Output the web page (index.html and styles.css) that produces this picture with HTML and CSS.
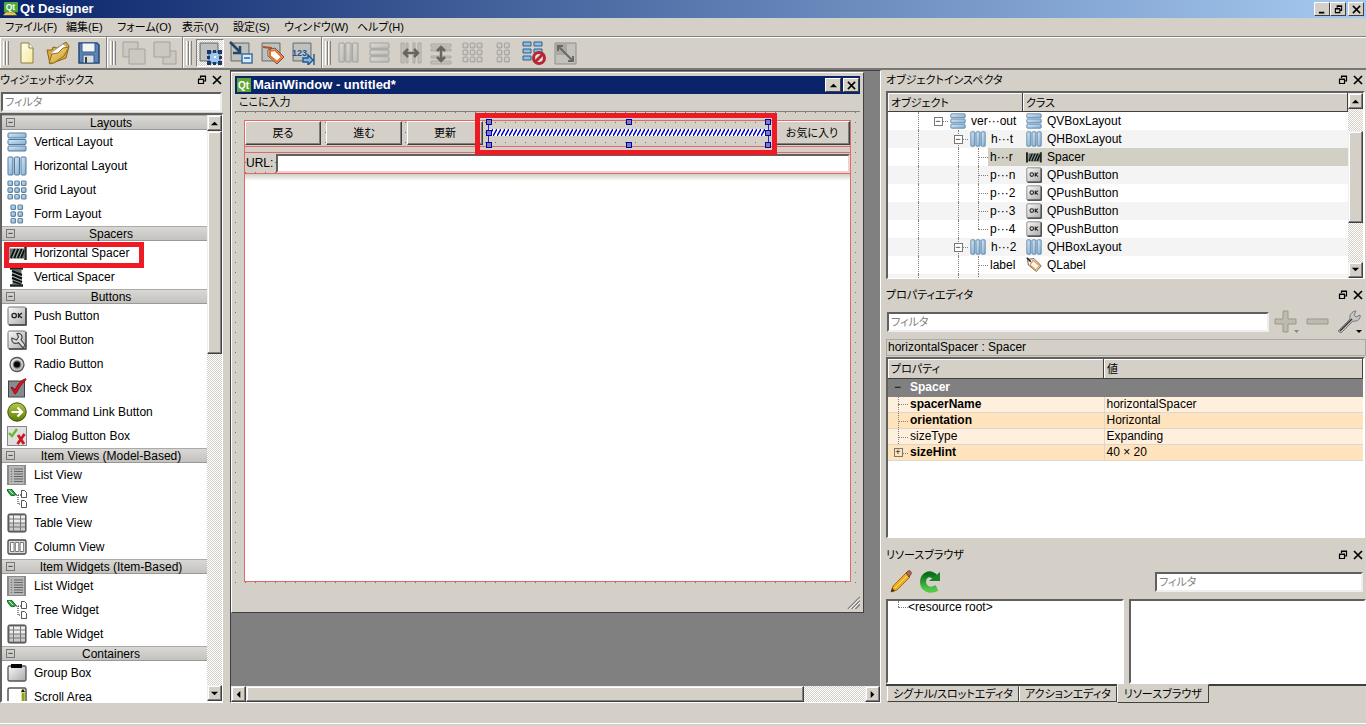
FILE: index.html
```html
<!DOCTYPE html>
<html lang="ja">
<head>
<meta charset="utf-8">
<title>Qt Designer</title>
<link rel="stylesheet" href="styles.css">
</head>
<body>
<svg class="defs" aria-hidden="true">
  <defs>
    <linearGradient id="blue" x1="0" y1="0" x2="1" y2="1"><stop offset="0" stop-color="#d8ecfa"/><stop offset="1" stop-color="#7eabd0"/></linearGradient>
    <linearGradient id="silver" x1="0" y1="0" x2="1" y2="1"><stop offset="0" stop-color="#fafafa"/><stop offset="1" stop-color="#a9a9a9"/></linearGradient>
    <linearGradient id="green" x1="0" y1="0" x2="0" y2="1"><stop offset="0" stop-color="#b4ca4c"/><stop offset="1" stop-color="#5e7a00"/></linearGradient>
    <linearGradient id="refresh" x1="0" y1="0" x2="0" y2="1"><stop offset="0" stop-color="#0c6e1c"/><stop offset="1" stop-color="#52c848"/></linearGradient>
    <linearGradient id="amber" x1="0" y1="0" x2="1" y2="1"><stop offset="0" stop-color="#f8e29a"/><stop offset="1" stop-color="#c8921c"/></linearGradient>
    <linearGradient id="paper" x1="0" y1="0" x2="1" y2="1"><stop offset="0" stop-color="#fffef0"/><stop offset="1" stop-color="#f5ea96"/></linearGradient>
    <pattern id="hatch" width="4" height="7" patternUnits="userSpaceOnUse"><path d="M0 0h4v7H0z" fill="#fff"/><path d="M0 7 4 0" stroke="#0000c8" stroke-width="1.5"/></pattern>
  </defs>
  <symbol id="vbox" viewBox="0 0 20 20"><g fill="url(#blue)" stroke="#52789a"><rect x="1" y="1" width="18" height="5" rx="1"/><rect x="1" y="7.500" width="18" height="5" rx="1"/><rect x="1" y="14" width="18" height="5" rx="1"/></g></symbol>
  <symbol id="hbox" viewBox="0 0 20 20"><g fill="url(#blue)" stroke="#52789a"><rect x="1" y="1" width="5" height="18" rx="1"/><rect x="7.500" y="1" width="5" height="18" rx="1"/><rect x="14" y="1" width="5" height="18" rx="1"/></g></symbol>
  <symbol id="grid" viewBox="0 0 20 20"><g fill="url(#blue)" stroke="#6184a2" stroke-width="1.200"><rect x="1" y="1" width="4.500" height="4.500" rx="1"/><rect x="7.800" y="1" width="4.500" height="4.500" rx="1"/><rect x="14.500" y="1" width="4.500" height="4.500" rx="1"/><rect x="1" y="7.800" width="4.500" height="4.500" rx="1"/><rect x="7.800" y="7.800" width="4.500" height="4.500" rx="1"/><rect x="14.500" y="7.800" width="4.500" height="4.500" rx="1"/><rect x="1" y="14.500" width="4.500" height="4.500" rx="1"/><rect x="7.800" y="14.500" width="4.500" height="4.500" rx="1"/><rect x="14.500" y="14.500" width="4.500" height="4.500" rx="1"/></g></symbol>
  <symbol id="form" viewBox="0 0 20 20"><g fill="url(#blue)" stroke="#6184a2" stroke-width="1.200"><rect x="4" y="1" width="4.500" height="4.500" rx="1"/><rect x="11" y="1" width="4.500" height="4.500" rx="1"/><rect x="4" y="7.800" width="4.500" height="4.500" rx="1"/><rect x="11" y="7.800" width="4.500" height="4.500" rx="1"/><rect x="4" y="14.500" width="4.500" height="4.500" rx="1"/><rect x="11" y="14.500" width="4.500" height="4.500" rx="1"/></g></symbol>
  <symbol id="hspacer" viewBox="0 0 20 20"><path d="M3 5.500h14v10H3z" fill="#63706c"/><path d="M4 15 8 6M7.500 15l4-9M11 15l4-9M14 15l3-8" stroke="#0a0e0e" stroke-width="2"/><path d="M5.500 14.500 9 6.500M9 14.500l3.500-8M12.500 14.500 16 6.500" stroke="#bcc8c2" stroke-width=".8"/><path d="M1.200 4v13M18.500 4v13" stroke="#222" stroke-width="2.400"/></symbol>
  <symbol id="vspacer" viewBox="0 0 20 20"><path d="M5.500 3h9v14h-9z" fill="#63706c"/><path d="M5 4l10 4M5 7.500l10 4M5 11l10 4M6 14l8 3" stroke="#0a0e0e" stroke-width="2"/><path d="M6 6l8 3.500M6 9.500l8 3.500M6 13l8 3" stroke="#bcc8c2" stroke-width=".8"/><path d="M3 1.500h13M3 18.500h13" stroke="#222" stroke-width="2.600"/></symbol>
  <symbol id="ok" viewBox="0 0 20 20"><rect x="1" y="1" width="18" height="18" rx="1.500" fill="url(#silver)" stroke="#777"/><path d="M19 2v17H2" fill="none" stroke="#3c3c3c" stroke-width="1.500"/><circle cx="7.200" cy="9.500" r="2.200" fill="none" stroke="#222" stroke-width="1.300"/><path d="M11.500 7v5M15 7l-3 2.500 3 2.500" fill="none" stroke="#222" stroke-width="1.300"/></symbol>
  <symbol id="tool" viewBox="0 0 20 20"><rect x="1" y="1" width="18" height="18" rx="1.500" fill="url(#silver)" stroke="#777"/><path d="M19 2v17H2" fill="none" stroke="#444" stroke-width="1.300"/><path d="M10 3.500c4-1 6.500 3 4 6.300L18 15l-2 3-4.500-5.500C8 15 3.800 12 5 8l4.500 2 2-3z" fill="#dedede" stroke="#4c4c4c" stroke-width="1.200"/></symbol>
  <symbol id="radio" viewBox="0 0 20 20"><circle cx="10" cy="10.500" r="7" fill="url(#silver)" stroke="#555" stroke-width="1.300"/><circle cx="10" cy="10.500" r="4.300" fill="#777"/><circle cx="10" cy="10.500" r="3" fill="#050505"/></symbol>
  <symbol id="check" viewBox="0 0 20 20"><rect x="1.500" y="3" width="16" height="16" fill="#858b90" stroke="#444"/><path d="M4 9.500c2-.5 3 1 4 2.500C11 6 14 2 18.500.800c1 0 .5 1.500-.5 2.200C14 6 11 12 9 15.500c-1 1-2 0-2-1z" fill="#d81418" stroke="#7e080a" stroke-width=".8"/></symbol>
  <symbol id="link" viewBox="0 0 20 20"><circle cx="10" cy="10" r="9.200" fill="url(#green)" stroke="#3e5200"/><path d="M4.500 10H15M10.500 5.500 15 10l-4.500 4.500" fill="none" stroke="#fff" stroke-width="2.200"/></symbol>
  <symbol id="dialog" viewBox="0 0 20 20"><rect x=".5" y=".5" width="19" height="19" fill="#e0e0e0" stroke="#888"/><path d="M2 7l3 3 5-7" fill="none" stroke="#63b835" stroke-width="2.400"/><path d="M11 9l6 9M17.500 8l-7 10" fill="none" stroke="#cf1822" stroke-width="2.800"/></symbol>
  <symbol id="list" viewBox="0 0 20 20"><path d="M0 0h19v20H0z" fill="#8b8b8b"/><path d="M2 1h15v18H2z" fill="#b7b7b7"/><path d="M4 4h1M7 4h9M4 6.500h1M7 6.500h9M4 9h1M7 9h9M4 11.500h1M7 11.500h9M4 14h1M7 14h9M4 16.500h1M7 16.500h9" stroke="#666"/></symbol>
  <symbol id="tree" viewBox="0 0 20 20"><path d="M0 1c1-1.500 3-1.500 5-.5l4 5c-2 1.500-5 1.500-6 0z" fill="#39a648" stroke="#135c20"/><path d="M2 1l4 4" stroke="#bbf0bb"/><path d="M9 6h5M11 6v9h3" fill="none" stroke="#222" stroke-dasharray="1 1"/><g fill="#fff" stroke="#555"><path d="M14.500 1.500h3l2 2v5h-5zM14.500 11.500h3l2 2v5h-5z"/></g></symbol>
  <symbol id="table" viewBox="0 0 20 20"><rect x="1" y="1" width="18" height="18" rx="1.500" fill="#777" stroke="#414141"/><g fill="#eee"><path d="M2.500 2.500h3.500v3H2.500zM7 2.500h6v3H7zM14 2.500h4v3h-4zM2.500 6.500h3.500v3H2.500zM7 6.500h6v3H7zM14 6.500h4v3h-4z"/><path d="M2.500 10.500h3.500v3H2.500zM7 10.500h6v3H7zM14 10.500h4v3h-4zM2.500 14.500h3.500v3H2.500zM7 14.500h6v3H7zM14 14.500h4v3h-4z" fill="#ccc"/></g></symbol>
  <symbol id="column" viewBox="0 0 20 20"><rect x="1" y="3" width="18" height="14" rx="1.500" fill="#ddd" stroke="#444" stroke-width="1.300"/><g fill="#fff" stroke="#777"><path d="M3.500 5.500H7v9H3.500zM8.300 5.500h3.500v9H8.300zM13.100 5.500h3.500v9h-3.500z"/></g></symbol>
  <symbol id="group" viewBox="0 0 20 20"><rect x="1" y="3" width="18" height="15" rx="1.500" fill="url(#silver)" stroke="#555" stroke-width="1.300"/><path d="M4 1h11v4H4z" fill="#050505"/></symbol>
  <symbol id="scroll" viewBox="0 0 20 20"><rect x="1" y="1" width="18" height="20" rx="1.500" fill="#fff" stroke="#555" stroke-width="1.500"/><path d="M14 2h4v19h-4z" fill="#d8dca0"/><path d="M15 6h2.500v14H15z" fill="#94a80c"/><path d="M14 5l2-3 2 3z" fill="#111"/></symbol>
  <symbol id="tag" viewBox="0 0 20 20"><path d="M2 3l8-1 9 9-6 7L3 10z" fill="#fff" stroke="#4a3520"/><path d="M9 4l8 7-5 5-7-6z" fill="#fff4e4" stroke="#e09a50" stroke-width="1.500"/><path d="M1 1l5 5" stroke="#222" stroke-width="2"/></symbol>
  <symbol id="restore" viewBox="0 0 10 10"><path d="M3.500 3V1.500h5V6H7M3 1h6M1.500 4.500h5v4h-5zM1 4h6" fill="none" stroke="#000" stroke-width="1.200"/></symbol>
  <symbol id="close" viewBox="0 0 10 10"><path d="M1 1l8 8M9 1 1 9" stroke="#000" stroke-width="1.700"/></symbol>
  <symbol id="minimize" viewBox="0 0 10 10"><path d="M1 8.500h6" stroke="#000" stroke-width="2"/></symbol>
  <symbol id="up" viewBox="0 0 10 10"><path d="M5 3l4 4H1z"/></symbol>
  <symbol id="down" viewBox="0 0 10 10"><path d="M5 7 1 3h8z"/></symbol>
  <symbol id="left" viewBox="0 0 10 10"><path d="M3 5l4-4v8z"/></symbol>
  <symbol id="right" viewBox="0 0 10 10"><path d="M7 5 3 9V1z"/></symbol>
  <symbol id="square" viewBox="0 0 24 24"><path d="M2 2h18v18H2z" fill="#aeb0af" stroke="#6c7070"/><path d="M3 3h16v16H3z" fill="#bfc1bf"/></symbol>
</svg>

<header class="titlebar">
  <svg class="app-icon" viewBox="0 0 16 16"><rect width="15" height="11" x="1" rx="1" fill="#4fa83c"/><path d="M0 14l3-3h9l3 3z" fill="#e5c844"/><text x="3" y="9" class="logo-text">Qt</text></svg>
  <h1>Qt Designer</h1>
  <div class="win-buttons"><button aria-label="最小化"><svg><use href="#minimize"/></svg></button><button aria-label="元に戻す"><svg><use href="#restore"/></svg></button><button class="apart" aria-label="閉じる"><svg><use href="#close"/></svg></button></div>
</header>

<nav class="menubar">
  <button class="m-file">ファイル(F)</button><button class="m-edit">編集(E)</button><button class="m-form">フォーム(O)</button><button class="m-edit">表示(V)</button><button class="m-edit">設定(S)</button><button class="m-window">ウィンドウ(W)</button><button>ヘルプ(H)</button>
</nav>

<div class="toolbars">
  <div class="toolbar">
    <button aria-label="新規"><svg viewBox="0 0 24 24"><path d="M6 2h8l4 5v15H6z" fill="url(#paper)" stroke="#8a7e48"/><path d="M14 2v5h4" fill="#fff" stroke="#8a7e48"/></svg></button>
    <button aria-label="開く"><svg viewBox="0 0 24 24"><path d="M1 9h5l1-3 4 1 9-6 3 4-3 12-16 6z" fill="#d9a93e" stroke="#8d6517"/><path d="M5 12 17 3l4 3-10 10z" fill="#fff" stroke="#aaa"/><path d="M3 22l3-9 6-1 5-5 6-1-5 9-10 7z" fill="url(#amber)" stroke="#976d18"/></svg></button>
    <button aria-label="保存"><svg viewBox="0 0 24 24"><path d="M2 2h18l2 2v18H2z" fill="#5b84b4" stroke="#254a74" stroke-width="1.500"/><path d="M5 2h13v9H5z" fill="#f2f5f8" stroke="#345c88"/><path d="M6 14h11v8H6z" fill="#ddd" stroke="#345c88"/><path d="M9 16v6" stroke="#35424e" stroke-width="2"/></svg></button>
  </div>
  <div class="toolbar">
    <button aria-label="前面へ"><svg viewBox="0 0 24 24" class="faded"><path d="M1 1h15v15H1z"/><path d="M7 8h16v15H7z"/></svg></button>
    <button aria-label="背面へ"><svg viewBox="0 0 24 24" class="faded"><path d="M10 10h13v13H10z"/><path d="M1 1h16v15H1z"/></svg></button>
  </div>
  <div class="toolbar modes">
    <button class="pressed" aria-label="ウィジェットを編集"><svg viewBox="0 0 24 24"><use href="#square"/><path d="M11 11h11v11H11z" fill="#9cc7f1" stroke="#386ba0"/><path d="M16 15h2v2h-2z" fill="#fff"/><g fill="#203666"><path d="M9 9h4v4H9zM15 9h3v3h-3zM20 9h4v4h-4zM9 15h3v3H9zM21 15h3v3h-3zM9 20h4v4H9zM15 21h3v3h-3zM20 20h4v4h-4z"/></g></svg></button>
    <button aria-label="シグナルを編集"><svg viewBox="0 0 24 24"><use href="#square"/><path d="M1 1l10 10M11 5v7H4" fill="none" stroke="#234568" stroke-width="2.500"/><path d="M13 13h10v9H13z" fill="#d8ecfb" stroke="#3d6f9f" stroke-width="1.500"/><path d="M15 17h6" stroke="#5088bd" stroke-width="2"/></svg></button>
    <button aria-label="buddyを編集"><svg viewBox="0 0 24 24"><use href="#square"/><path d="M3 6l8 1 2 3" fill="none" stroke="#b84d1c" stroke-width="2"/><path d="M8 9l7-2 9 9-7 7-9-8z" fill="#fff" stroke="#555"/><path d="M10 10l5-1 7 7-5 5-7-6z" fill="none" stroke="#ef6d21" stroke-width="2"/></svg></button>
    <button aria-label="タブ順序を編集"><svg viewBox="0 0 24 24"><use href="#square"/><text x="1" y="15" class="tab-text">123</text><path d="M12 17h5v-3l5 5-5 5v-3h-5zM23 13v11" fill="#80b9e9" stroke="#25558b" stroke-width="1.400"/></svg></button>
  </div>
  <div class="toolbar layouts">
    <button aria-label="水平に並べる"><svg class="gray" viewBox="0 0 20 20"><use href="#hbox"/></svg></button>
    <button aria-label="垂直に並べる"><svg class="gray" viewBox="0 0 20 20"><use href="#vbox"/></svg></button>
    <button aria-label="水平スプリッタ"><svg viewBox="0 0 24 24"><path d="M3 2h3v20H3zM8 2h2v20H8zM15 2h2v20h-2zM20 2h3v20h-3z" fill="#c3c1ba" stroke="#aaa8a1"/><path d="M6 12h14M10 8l-4 4 4 4M16 8l4 4-4 4" fill="none" stroke="#68655f" stroke-width="2.500"/></svg></button>
    <button aria-label="垂直スプリッタ"><svg viewBox="0 0 24 24"><path d="M2 3h20v3H2zM2 8h20v2H2zM2 15h20v2H2zM2 20h20v3H2z" fill="#c3c1ba" stroke="#aaa8a1"/><path d="M12 6v14M8 10l4-4 4 4M8 16l4 4 4-4" fill="none" stroke="#68655f" stroke-width="2.500"/></svg></button>
    <button aria-label="格子状に並べる"><svg class="gray" viewBox="0 0 20 20"><use href="#grid"/></svg></button>
    <button aria-label="フォームレイアウト"><svg class="gray" viewBox="0 0 20 20"><use href="#form"/></svg></button>
    <button aria-label="レイアウトを解除"><svg viewBox="0 0 24 24"><g fill="#8dbde5" stroke="#315e8c"><path d="M1 1h8v4H1zM12 1h8v4h-8zM1 8h8v4H1zM12 8h8v4h-8zM1 15h8v4H1z"/></g><circle cx="17" cy="17" r="5.500" fill="#ddd" stroke="#b8272d" stroke-width="3"/><path d="M13 21l8-8" stroke="#b8272d" stroke-width="3"/></svg></button>
    <button aria-label="サイズを調整"><svg viewBox="0 0 24 24"><path d="M2 2h21v21H2z" fill="#c2c1ba" stroke="#8f8d87"/><path d="M2 2h12v12H2z" fill="#aaa9a3"/><path d="M5 5l15 15M5 10V5h5M20 15v5h-5" fill="none" stroke="#6b6964" stroke-width="2"/></svg></button>
  </div>
</div>

<main class="workspace">
  <aside class="dock widget-box">
    <div class="dock-title"><h2>ウィジェットボックス</h2><button aria-label="フロート"><svg><use href="#restore"/></svg></button><button aria-label="閉じる"><svg><use href="#close"/></svg></button></div>
    <input class="field" aria-label="ウィジェットを検索" placeholder="フィルタ">
    <div class="widget-frame sunken">
      <div class="widget-list">
        <button class="category"><i class="toggle">−</i><span>Layouts</span></button>
        <ul><li><svg><use href="#vbox"/></svg>Vertical Layout</li><li><svg><use href="#hbox"/></svg>Horizontal Layout</li><li><svg><use href="#grid"/></svg>Grid Layout</li><li><svg><use href="#form"/></svg>Form Layout</li></ul>
        <button class="category"><i class="toggle">−</i><span>Spacers</span></button>
        <ul><li class="marked"><svg><use href="#hspacer"/></svg>Horizontal Spacer</li><li><svg><use href="#vspacer"/></svg>Vertical Spacer</li></ul>
        <button class="category"><i class="toggle">−</i><span>Buttons</span></button>
        <ul><li><svg><use href="#ok"/></svg>Push Button</li><li><svg><use href="#tool"/></svg>Tool Button</li><li><svg><use href="#radio"/></svg>Radio Button</li><li><svg><use href="#check"/></svg>Check Box</li><li><svg><use href="#link"/></svg>Command Link Button</li><li><svg><use href="#dialog"/></svg>Dialog Button Box</li></ul>
        <button class="category"><i class="toggle">−</i><span>Item Views (Model-Based)</span></button>
        <ul><li><svg><use href="#list"/></svg>List View</li><li><svg><use href="#tree"/></svg>Tree View</li><li><svg><use href="#table"/></svg>Table View</li><li><svg><use href="#column"/></svg>Column View</li></ul>
        <button class="category"><i class="toggle">−</i><span>Item Widgets (Item-Based)</span></button>
        <ul><li><svg><use href="#list"/></svg>List Widget</li><li><svg><use href="#tree"/></svg>Tree Widget</li><li><svg><use href="#table"/></svg>Table Widget</li></ul>
        <button class="category"><i class="toggle">−</i><span>Containers</span></button>
        <ul><li><svg><use href="#group"/></svg>Group Box</li><li><svg><use href="#scroll"/></svg>Scroll Area</li></ul>
      </div>
      <div class="scrollbar vertical"><button aria-label="上へ"><svg><use href="#up"/></svg></button><span class="thumb widget-thumb"></span><span class="grow"></span><button aria-label="下へ"><svg><use href="#down"/></svg></button></div>
    </div>
  </aside>

  <section class="mdi">
    <div class="canvas">
      <div class="subwindow">
        <div class="sub-title"><svg class="qt-icon" viewBox="0 0 14 14"><rect width="14" height="14" fill="#5fa633"/><text x="1" y="11" class="logo-text large">Qt</text></svg><h2>MainWindow - untitled*</h2><div class="win-buttons"><button aria-label="最大化"><svg><use href="#up"/></svg></button><button class="apart" aria-label="閉じる"><svg><use href="#close"/></svg></button></div></div>
        <div class="sub-menu"><button>ここに入力</button></div>
        <div class="form-area">
          <div class="vlayout">
            <div class="button-row">
              <button class="push">戻る</button><button class="push">進む</button><button class="push">更新</button>
              <div class="spacer"><svg class="hatch"><rect width="100%" height="7" fill="url(#hatch)"/></svg><i class="h nw"></i><i class="h n"></i><i class="h ne"></i><i class="h w"></i><i class="h e"></i><i class="h sw"></i><i class="h s"></i><i class="h se"></i></div>
              <button class="push">お気に入り</button>
            </div>
            <div class="url-row"><label for="url">URL:</label><input id="url" class="url"></div>
            <div class="web-view"></div>
          </div>
        </div>
        <div class="form-status"><svg viewBox="0 0 14 14"><path d="M1 14 14 1M5 14l9-9M9 14l5-5" stroke="#808080" stroke-width="1.500"/><path d="M2.500 14 14 2.500M6.500 14 14 6.500" stroke="#fff"/></svg></div>
      </div>
    </div>
    <div class="scrollbar horizontal"><button aria-label="左へ"><svg><use href="#left"/></svg></button><span class="thumb mdi-thumb"></span><span class="grow"></span><button aria-label="右へ"><svg><use href="#right"/></svg></button></div>
  </section>

  <aside class="right-docks">
    <section class="dock inspector">
      <div class="dock-title"><h2>オブジェクトインスペクタ</h2><button aria-label="フロート"><svg><use href="#restore"/></svg></button><button aria-label="閉じる"><svg><use href="#close"/></svg></button></div>
      <div class="tree-frame sunken">
        <div class="tree-view">
          <table class="object-tree">
            <thead><tr><th>オブジェクト</th><th>クラス</th></tr></thead>
            <tbody>
              <tr><td><div class="branch"><i></i><i class="v"></i><i class="x"><b class="toggle">−</b></i><svg><use href="#vbox"/></svg>ver···out</div></td><td><svg><use href="#vbox"/></svg>QVBoxLayout</td></tr>
              <tr><td><div class="branch"><i></i><i class="v"></i><i></i><i class="x v"><b class="toggle">−</b></i><svg><use href="#hbox"/></svg>h···t</div></td><td><svg><use href="#hbox"/></svg>QHBoxLayout</td></tr>
              <tr class="selected"><td><div class="branch"><i></i><i class="v"></i><i></i><i class="v"></i><i class="v t"></i><span>h···r</span></div></td><td><svg><use href="#hspacer"/></svg>Spacer</td></tr>
              <tr><td><div class="branch"><i></i><i class="v"></i><i></i><i class="v"></i><i class="v t"></i><span>p···n</span></div></td><td><svg><use href="#ok"/></svg>QPushButton</td></tr>
              <tr><td><div class="branch"><i></i><i class="v"></i><i></i><i class="v"></i><i class="v t"></i><span>p···2</span></div></td><td><svg><use href="#ok"/></svg>QPushButton</td></tr>
              <tr><td><div class="branch"><i></i><i class="v"></i><i></i><i class="v"></i><i class="v t"></i><span>p···3</span></div></td><td><svg><use href="#ok"/></svg>QPushButton</td></tr>
              <tr><td><div class="branch"><i></i><i class="v"></i><i></i><i class="v"></i><i class="l t"></i><span>p···4</span></div></td><td><svg><use href="#ok"/></svg>QPushButton</td></tr>
              <tr><td><div class="branch"><i></i><i class="v"></i><i></i><i class="x v"><b class="toggle">−</b></i><svg><use href="#hbox"/></svg>h···2</div></td><td><svg><use href="#hbox"/></svg>QHBoxLayout</td></tr>
              <tr><td><div class="branch"><i></i><i class="v"></i><i></i><i class="v"></i><i class="v t"></i><span>label</span></div></td><td><svg><use href="#tag"/></svg>QLabel</td></tr>
              <tr><td><div class="branch"><i></i><i class="v"></i><i></i><i class="v"></i><i class="l t"></i><span>li···it</span></div></td><td class="no-icon">QLineEdit</td></tr>
            </tbody>
          </table>
        </div>
        <div class="scrollbar vertical"><button aria-label="上へ"><svg><use href="#up"/></svg></button><span class="track-gap"></span><span class="thumb tree-thumb"></span><span class="grow"></span><button aria-label="下へ"><svg><use href="#down"/></svg></button></div>
      </div>
    </section>

    <section class="dock properties">
      <div class="dock-title"><h2>プロパティエディタ</h2><button aria-label="フロート"><svg><use href="#restore"/></svg></button><button aria-label="閉じる"><svg><use href="#close"/></svg></button></div>
      <div class="property-tools">
        <input class="field" aria-label="プロパティを検索" placeholder="フィルタ">
        <button aria-label="追加"><svg viewBox="0 0 26 24"><path d="M9 1h5v8h8v5h-8v8H9v-8H1V9h8z" fill="#bdbbb0" stroke="#9a988f"/><path d="M20 20h5l-2.500 3z" fill="#888"/></svg></button>
        <button aria-label="削除"><svg viewBox="0 0 26 24"><path d="M2 9h21v5H2z" fill="#bdbbb0" stroke="#9a988f"/></svg></button>
        <button aria-label="設定"><svg viewBox="0 0 26 24"><path d="M2 21 14 9c-1-4 2-8 6-8l-2 4 2 2 4-2c1 4-3 7-7 6L5 23z" fill="#c5c5c5" stroke="#777"/><path d="M4 21 16 9" stroke="#333" stroke-width="1.500"/><path d="M20 20h6l-3 3z"/></svg></button>
      </div>
      <div class="selection-name">horizontalSpacer : Spacer</div>
      <div class="property-frame sunken">
        <table class="property-table">
          <thead><tr><th>プロパティ</th><th>値</th></tr></thead>
          <tbody>
            <tr class="group"><td colspan="2"><b class="minus">−</b>Spacer</td></tr>
            <tr class="pale strong"><td><div class="branch"><i class="v t"></i>spacerName</div></td><td>horizontalSpacer</td></tr>
            <tr class="deep strong"><td><div class="branch"><i class="v t"></i>orientation</div></td><td>Horizontal</td></tr>
            <tr class="pale"><td><div class="branch"><i class="v t"></i>sizeType</div></td><td>Expanding</td></tr>
            <tr class="deep strong"><td><div class="branch"><i class="x"><b class="toggle">+</b></i>sizeHint</div></td><td>40 × 20</td></tr>
          </tbody>
        </table>
      </div>
    </section>

    <section class="dock resources">
      <div class="dock-title"><h2>リソースブラウザ</h2><button aria-label="フロート"><svg><use href="#restore"/></svg></button><button aria-label="閉じる"><svg><use href="#close"/></svg></button></div>
      <div class="resource-tools">
        <button aria-label="リソースを編集"><svg viewBox="0 0 24 24"><path d="M2 22l2-6L17 3l4 4L8 20z" fill="#efad26" stroke="#a66d13"/><path d="M6 18 19 5" stroke="#ffe57c"/><path d="M17 3l2-2c2-1 4 1 3 3l-2 3z" fill="#b6694f" stroke="#7a4333"/><path d="M2 22l1-4 3 3z" fill="#3b3022"/></svg></button>
        <button aria-label="再読み込み"><svg viewBox="0 0 24 24"><path d="M17 7C11 1 5 6 5 12s6 10 14 6" fill="none" stroke="url(#refresh)" stroke-width="6"/><path d="M22 2v9H11z" fill="#18842a"/></svg></button>
        <input class="field" aria-label="リソースを検索" placeholder="フィルタ">
      </div>
      <div class="resource-panes"><div class="pane sunken"><div class="branch"><i class="l t"></i>&lt;resource root&gt;</div></div><div class="pane sunken"></div></div>
      <div class="tabs" role="tablist"><button role="tab">シグナル/スロットエディタ</button><button role="tab">アクションエディタ</button><button role="tab" aria-selected="true" class="active">リソースブラウザ</button></div>
    </section>
  </aside>
</main>
<footer class="statusbar"></footer>
</body>
</html>
```
FILE: styles.css
```css
:root {
  --face: #d4d0c8;
  --shadow: #808080;
  --dark: #404040;
  --red: #ed1c24;
  --guide: #e06a6a;
}

*, *::before, *::after { box-sizing: border-box; }

body {
  margin: 0;
  height: 100vh;
  display: flex;
  flex-direction: column;
  overflow: hidden;
  background: var(--face);
  color: #000;
  font: 12px/16px "Liberation Sans", "Noto Sans CJK JP", sans-serif;
}

button, input {
  font: inherit;
  color: inherit;
  border: 0;
  padding: 0;
  margin: 0;
  background: none;
  border-radius: 0;
}

h1, h2 { margin: 0; font-size: 12px; font-weight: normal; }
ul { margin: 0; padding: 0; list-style: none; }
i, b { font-style: normal; }
svg { display: block; flex: none; }
.defs { position: absolute; width: 0; height: 0; }
.grow { flex: 1; }

.logo-text { font: bold 9px "Liberation Sans", sans-serif; fill: #fff; }
.logo-text.large { font-size: 10px; }
.tab-text { font: bold 9px "Liberation Sans", sans-serif; fill: #25558b; }

.titlebar {
  display: flex;
  align-items: center;
  flex: none;
  height: 18px;
  padding: 0 2px 0 3px;
  gap: 2px;
  background: linear-gradient(90deg, #0a246a, #a6caf0);
  color: #fff;
}
.titlebar h1, .sub-title h2 { flex: 1; font-size: 13px; font-weight: bold; }
.app-icon { width: 15px; height: 15px; }

.win-buttons { display: flex; }
.win-buttons button {
  width: 16px;
  height: 14px;
  display: grid;
  place-items: center;
  background: var(--face);
  border: 1px solid;
  border-color: #fff var(--dark) var(--dark) #fff;
}
.win-buttons svg { width: 9px; height: 9px; }
.win-buttons .apart { margin-left: 2px; }

.menubar {
  display: flex;
  flex: none;
  height: 18px;
  padding-left: 5px;
  font-size: 11px;
  font-feature-settings: "palt";
}
.menubar button { text-align: left; white-space: nowrap; }
.m-file { width: 61px; }
.m-edit { width: 51px; }
.m-form { width: 65px; }
.m-window { width: 73px; }

.toolbars {
  display: flex;
  flex: none;
  height: 34px;
  border-top: 1px solid var(--shadow);
  border-bottom: 2px solid #777;
}
.toolbar {
  display: flex;
  align-items: center;
  gap: 5px;
  padding: 0 4px 0 14px;
  border-right: 1px solid var(--shadow);
  box-shadow: inset 1px 1px #fff;
  position: relative;
}
.toolbar:last-child { flex: 1; border-right: 0; }
.toolbar::before {
  content: "";
  position: absolute;
  left: 3px;
  top: 4px;
  bottom: 3px;
  width: 6px;
  background: linear-gradient(90deg, #fff 1px, var(--face) 1px 2px, #808080 2px 3px, #fff 3px 4px, var(--face) 4px 5px, #808080 5px);
}
.toolbar button { width: 26px; height: 28px; display: grid; place-items: center; }
.toolbar svg { width: 24px; height: 24px; }
.toolbar.modes { padding-left: 13px; gap: 3px; }
.toolbar.modes button { width: 28px; }
.toolbar.layouts { padding-left: 13px; }
.toolbar .gray { width: 21px; height: 21px; filter: grayscale(1); opacity: .5; }
.faded path { fill: #cbc8c1; stroke: #a5a29b; stroke-width: 1; }
.pressed {
  background: repeating-conic-gradient(#fff 0 25%, var(--face) 0 50%) 0 0 / 2px 2px;
  border: 1px solid;
  border-color: var(--shadow) #fff #fff var(--shadow);
}

.workspace {
  flex: 1;
  min-height: 0;
  display: grid;
  grid-template-columns: 223px minmax(0, 1fr) 482px;
}

.dock { display: flex; flex-direction: column; min-height: 0; min-width: 0; }
.dock-title { display: flex; align-items: center; flex: none; height: 19px; gap: 5px; padding: 0 3px 0 0; }
.dock-title h2 { flex: 1; font-size: 11px; font-feature-settings: "palt"; white-space: nowrap; }
.dock-title button { width: 10px; height: 10px; }
.dock-title svg { width: 10px; height: 10px; }

.sunken {
  border: 2px solid;
  border-color: #606060 #fff #fff #606060;
  background: #fff;
}
.field {
  height: 20px;
  min-width: 0;
  padding: 0 2px;
  background: #fff;
  border: 2px solid;
  border-color: #606060 #eee #eee #606060;
  font-size: 11px;
  font-feature-settings: "palt";
}
.field::placeholder { color: #808080; opacity: 1; }

.widget-box > .dock-title { padding-right: 1px; }
.widget-box > .field { margin: 3px 1px 1px; }
.widget-frame { flex: 1; min-height: 0; display: flex; border-right-width: 1px; }
.widget-list { flex: 1; min-width: 0; overflow: hidden; }
.category {
  position: relative;
  display: flex;
  align-items: center;
  width: 100%;
  height: 15px;
  padding-left: 4px;
  background: linear-gradient(#dad8d4, #c4c2be);
  border-top: 1px solid #aaa;
  border-bottom: 1px solid #999;
}
.category span { flex: 1; text-align: center; }
.toggle {
  width: 9px;
  height: 9px;
  flex: none;
  border: 1px solid #777;
  font-size: 9px;
  line-height: 7px;
  text-align: center;
  font-weight: normal;
}
.widget-list li {
  position: relative;
  display: flex;
  align-items: center;
  gap: 7px;
  height: 24px;
  padding-left: 5px;
}
.widget-list svg { width: 20px; height: 20px; }
.marked::after {
  content: "";
  position: absolute;
  left: 2px;
  top: 1px;
  width: 140px;
  height: 26px;
  z-index: 1;
  border: 5px solid var(--red);
}

.scrollbar {
  display: flex;
  flex: none;
  background: repeating-conic-gradient(#fff 0 25%, var(--face) 0 50%) 0 0 / 2px 2px;
}
.vertical { width: 15px; flex-direction: column; }
.horizontal { height: 16px; }
.scrollbar button, .thumb {
  flex: none;
  background: var(--face);
  border: 1px solid;
  border-color: #eee var(--dark) var(--dark) #eee;
  box-shadow: inset -1px -1px var(--shadow), inset 1px 1px #fff;
}
.scrollbar button { width: 15px; height: 16px; display: grid; place-items: center; }
.scrollbar svg { width: 9px; height: 9px; }
.widget-thumb { height: 38%; }
.track-gap { height: 12%; }
.tree-thumb { height: 50%; }
.mdi-thumb { width: 86%; }

.mdi {
  display: flex;
  flex-direction: column;
  min-width: 0;
  min-height: 0;
  margin: 0 3px 0 7px;
  border: 1px solid var(--dark);
  border-right-color: #fff;
  border-bottom-color: #fff;
}
.canvas { position: relative; flex: 1; min-height: 0; overflow: hidden; background: #808080; }
.subwindow {
  position: absolute;
  left: 0;
  top: 1px;
  width: 633px;
  height: 541px;
  display: flex;
  flex-direction: column;
  padding: 3px;
  background: var(--face);
  border: 1px solid;
  border-color: #fff var(--dark) var(--dark) #fff;
}
.sub-title { display: flex; align-items: center; flex: none; height: 18px; padding: 0 1px 0 2px; gap: 2px; background: #0a246a; color: #fff; }
.qt-icon { width: 14px; height: 14px; }
.sub-menu { flex: none; height: 18px; padding-left: 4px; border-bottom: 1px solid var(--shadow); font-feature-settings: "palt"; }
.sub-menu button { height: 16px; font-size: 11px; }
.form-area {
  flex: 1;
  min-height: 0;
  display: flex;
  padding: 8px 9px 4px;
  background: conic-gradient(at 1px 1px, transparent 75%, #77736b 0) 0 0 / 10px 10px;
}
.vlayout { flex: 1; min-width: 0; display: flex; flex-direction: column; border: 1px solid var(--guide); }
.button-row { position: relative; flex: none; display: flex; gap: 5px; height: 26px; border-bottom: 1px solid var(--guide); }
.push {
  width: 76px;
  height: 24px;
  flex: none;
  background: var(--face);
  border: 1px solid;
  border-color: #fff var(--dark) var(--dark) #fff;
  box-shadow: inset -1px -1px var(--shadow);
  font-feature-settings: "palt";
  font-size: 11px;
}
.spacer { position: relative; flex: 1; border: solid #2424d8; border-width: 0 1px; }
.spacer::before {
  content: "";
  position: absolute;
  inset: -8px -9px -9px -14px;
  border: 5px solid var(--red);
}
.hatch { position: absolute; left: 0; top: 8px; width: 100%; height: 7px; }
.h { position: absolute; width: 6px; height: 6px; background: #8080a0; border: 1px solid #0000b8; }
.nw, .n, .ne { top: -2px; }
.w, .e { top: 9px; }
.sw, .s, .se { bottom: -2px; }
.nw, .w, .sw { left: -3px; }
.n, .s { left: calc(50% - 3px); }
.ne, .e, .se { right: -3px; }
.url-row { flex: none; display: flex; align-items: center; gap: 6px; height: 22px; margin-top: 5px; border: solid var(--guide); border-width: 1px 0; }
.url-row label { padding-left: 1px; width: 25px; }
.url { flex: 1; min-width: 0; height: 19px; background: #fff; border: 2px solid; border-color: #606060 #f4cfcf #f4cfcf #606060; }
.web-view { flex: 1; background: linear-gradient(#cfcec6, #fff 7px); }
.form-status { flex: none; display: flex; justify-content: flex-end; align-items: flex-end; height: 23px; }
.form-status svg { width: 13px; height: 13px; }

.right-docks { display: flex; flex-direction: column; min-height: 0; padding: 0 0 0 2px; }
.inspector { flex: 214 1 0; }
.properties { flex: 259 1 0; }
.resources { flex: 159 1 0; }
.properties, .resources { padding-top: 4px; }
.tree-frame { flex: 1; min-height: 0; display: flex; margin: 2px 1px 3px 0; border-bottom-width: 1px; }
.tree-view { flex: 1; min-width: 0; overflow: hidden; }

table { width: 100%; border-collapse: collapse; table-layout: fixed; }
th {
  height: 19px;
  padding: 0 3px;
  text-align: left;
  font-size: 11px;
  font-weight: normal;
  font-feature-settings: "palt";
  background: var(--face);
  box-shadow: inset -1px -1px var(--dark), inset 1px 1px #fff;
}
td { padding: 0; white-space: nowrap; }
.object-tree th:first-child { width: 135px; }
.object-tree tr { height: 18px; }
.object-tree tbody tr:nth-child(even) { background: #f4f4f5; }
.object-tree td:last-child { padding-left: 3px; }
.object-tree td > svg { display: inline-block; vertical-align: middle; margin-right: 5px; }
.object-tree svg { width: 16px; height: 16px; }
.object-tree td:last-child.no-icon { padding-left: 24px; }
.object-tree .selected td:last-child,
.selected .branch span { background: #d2cfc5; }
.object-tree .branch { height: 18px; }
.object-tree .branch svg { margin: 0 5px 0 2px; }
.object-tree .branch span { flex: 1; line-height: 18px; padding-left: 2px; }

.branch { display: flex; align-items: center; height: 15px; }
.branch i { position: relative; flex: none; width: 20px; align-self: stretch; display: grid; place-items: center; }
.branch .v::before, .branch .l::before {
  content: "";
  position: absolute;
  left: 10px;
  top: 0;
  height: 100%;
  border-left: 1px dotted #808080;
}
.branch .l::before { height: 50%; }
.branch .t::after, .branch .x::after {
  content: "";
  position: absolute;
  left: 10px;
  right: 0;
  top: 50%;
  border-top: 1px dotted #808080;
}
.branch .toggle { position: relative; z-index: 1; background: #fff; }

.property-tools { display: flex; flex: none; align-items: center; gap: 5px; height: 34px; padding: 0 4px 0 1px; }
.property-tools .field { flex: 1; }
.property-tools svg { width: 26px; height: 24px; }
.selection-name { flex: none; height: 17px; line-height: 15px; padding-left: 1px; border: 1px solid #aaa8a0; }
.property-frame { flex: 1; min-height: 0; margin: 1px 1px 4px 0; border-bottom-width: 1px; overflow: hidden; }
.property-table th:first-child { width: 216px; }
.property-table th { height: 20px; }
.property-table tr { height: 16px; }
.property-table .group { height: 18px; background: #808080; color: #fff; font-weight: bold; }
.minus { display: inline-block; width: 22px; padding-left: 6px; color: #000; font-weight: normal; }
.property-table td { line-height: 15px; }
.pale { background: #fff0dd; }
.deep { background: #ffe3bd; }
.pale td, .deep td { border-bottom: 1px solid #ddd6cf; }
.pale td:last-child, .deep td:last-child { padding-left: 2px; border-left: 1px solid #ddd6cf; }
.strong .branch { font-weight: bold; }
.property-table .branch i { margin-right: 2px; }
.deep .toggle { background: #ffe3bd; }

.resource-tools { display: flex; flex: none; align-items: center; gap: 5px; height: 34px; padding: 0 3px; }
.resource-tools svg { width: 24px; height: 24px; }
.resource-tools .field { width: 208px; margin-left: auto; }
.resource-panes { flex: 1; min-height: 0; display: grid; grid-template-columns: 1fr 1fr; gap: 5px; }
.pane { min-width: 0; }
.pane .branch { height: 12px; }
.tabs { flex: none; display: flex; height: 19px; border-top: 2px solid var(--dark); padding-left: 1px; }
.tabs button {
  height: 16px;
  padding: 0 5px;
  background: var(--face);
  border: 1px solid;
  border-color: transparent var(--dark) var(--dark) #fff;
  font-size: 11px;
  line-height: 12px;
  font-feature-settings: "palt";
  white-space: nowrap;
}
.tabs .active { height: 19px; margin-top: -2px; padding: 2px 6px 0; }

.statusbar { flex: none; height: 21px; margin-bottom: 2px; border-bottom: 1px solid #fff; }
```
